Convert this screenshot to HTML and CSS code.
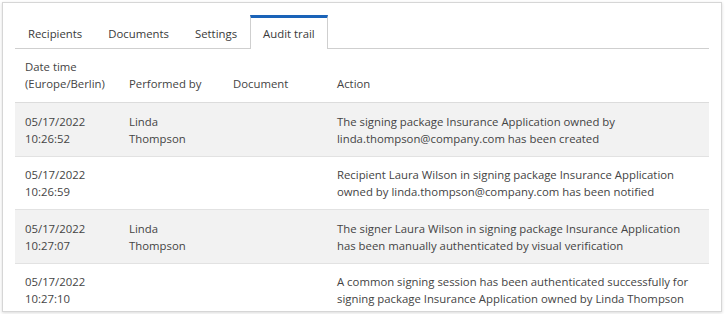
FILE: index.html
```html
<!DOCTYPE html>
<html>
<head>
    <meta charset="UTF-8">
    <title>Audit trail</title>
    <link rel="stylesheet" href="styles.css">
</head>
<body>
    <div class="card">
        <div class="tabs">
            <div class="tab">Recipients</div>
            <div class="tab">Documents</div>
            <div class="tab">Settings</div>
            <div class="tab active">Audit trail</div>
        </div>

        <table class="audit">
            <colgroup>
                <col class="col-narrow">
                <col class="col-narrow">
                <col class="col-narrow">
                <col>
            </colgroup>
            <thead>
                <tr>
                    <th>Date time (Europe/Berlin)</th>
                    <th>Performed by</th>
                    <th>Document</th>
                    <th>Action</th>
                </tr>
            </thead>
            <tbody>
                <tr class="shaded">
                    <td>05/17/2022 10:26:52</td>
                    <td>Linda Thompson</td>
                    <td></td>
                    <td>The signing package Insurance Application owned by linda.thompson@company.com has been created</td>
                </tr>
                <tr>
                    <td>05/17/2022 10:26:59</td>
                    <td></td>
                    <td></td>
                    <td>Recipient Laura Wilson in signing package Insurance Application owned by linda.thompson@company.com has been notified</td>
                </tr>
                <tr class="shaded">
                    <td>05/17/2022 10:27:07</td>
                    <td>Linda Thompson</td>
                    <td></td>
                    <td>The signer Laura Wilson in signing package Insurance Application has been manually authenticated by visual verification</td>
                </tr>
                <tr>
                    <td>05/17/2022 10:27:10</td>
                    <td></td>
                    <td></td>
                    <td>A common signing session has been authenticated successfully for signing package Insurance Application owned by Linda Thompson</td>
                </tr>
            </tbody>
        </table>
    </div>
</body>
</html>
```

FILE: styles.css
```css
* {
    margin: 0;
    padding: 0;
    box-sizing: border-box;
}

body {
    padding: 2px;
    background: white;
    font-family: "Open Sans", "Noto Sans", Arial, sans-serif;
    font-size: 11.35px;
    line-height: 17px;
    color: #444;
}

.card {
    width: 720px;
    height: 310px;
    overflow: hidden;
    border: 1px solid #d6d6d6;
    box-shadow: 0 1px 3px rgba(0, 0, 0, 0.15);
    padding: 12px 12px 0 12px;
    background: white;
}

.tabs {
    display: flex;
    border-bottom: 1px solid #cfcfcf;
}

.tab {
    height: 33px;
    padding: 0 12px;
    display: flex;
    align-items: center;
    border: 1px solid transparent;
    border-top-width: 3px;
    border-bottom: none;
    margin-bottom: -1px;
    color: #3a3a3a;
}

.tab.active {
    background: white;
    border-color: #cfcfcf;
    border-top-color: #1a63b8;
    height: 34px;
}

.audit {
    width: 100%;
    border-collapse: collapse;
    table-layout: fixed;
}

.col-narrow {
    width: 104px;
}

.audit th {
    font-weight: normal;
    text-align: left;
    vertical-align: bottom;
    padding: 9px 10px 10px 10px;
    border-bottom: 1px solid #dcdcdc;
}

.audit td {
    vertical-align: top;
    padding: 9.5px 10px 9px 10px;
    border-bottom: 1px solid #e2e2e2;
}

.audit tr.shaded td {
    background: #f2f2f2;
}
```
